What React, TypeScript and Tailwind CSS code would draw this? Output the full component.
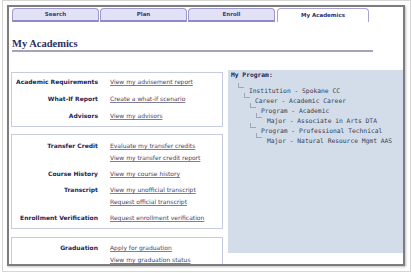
import React from "react";

const sans = { fontFamily: '"DejaVu Sans", Verdana, sans-serif' };
const mono = { fontFamily: '"DejaVu Sans Mono", monospace' };
const serif = { fontFamily: '"Liberation Serif", "Times New Roman", serif' };

type Row = { label: string; links: string[] };

function Box({ rows, gap, pt }: { rows: Row[]; gap: string; pt: string }) {
  return (
    <div className={`border border-[#c7cbe0] bg-white ${pt} pb-[4px]`}>
      <div className={`flex flex-col ${gap}`}>
        {rows.map((r) => (
          <div key={r.label} className="flex">
            <div
              className="w-[86px] shrink-0 text-right text-[6px] font-bold leading-[12px] text-[#1c2757]"
              style={sans}
            >
              {r.label}
            </div>
            <div className="ml-[12px] flex flex-col">
              {r.links.map((l) => (
                <span
                  key={l}
                  className="text-[6px] leading-[12px] text-[#3f4468] underline decoration-[#7b7f9c] underline-offset-1 whitespace-nowrap"
                  style={sans}
                >
                  {l}
                </span>
              ))}
            </div>
          </div>
        ))}
      </div>
    </div>
  );
}

function TreeItem({ level, text }: { level: number; text: string }) {
  return (
    <div className="flex items-start" style={{ paddingLeft: 7 + level * 6 }}>
      <span className="mt-[-3px] h-[5px] w-[6px] shrink-0 border-l border-b border-[#9ea6ba]" />
      <span
        className="ml-[5px] whitespace-nowrap text-[6.3px] leading-[10px] text-[#3b3e52]"
        style={mono}
      >
        {text}
      </span>
    </div>
  );
}

export default function App() {
  const tabs = ["Search", "Plan", "Enroll"];
  return (
    <div className="h-[273px] w-[412px] overflow-hidden bg-white">
      <div className="ml-[2px] h-[272px] w-[409px] border border-[#d6d6d6] bg-white">
        <div className="ml-[4px] mt-[4px] h-[261px] w-[398px] overflow-hidden border-2 border-[#7d7d7d] bg-white shadow-[1px_1px_2px_rgba(0,0,0,0.25)]">
          {/* tabs */}
          <div className="flex gap-[1px] pl-[3px] pt-[1px]">
            {tabs.map((t) => (
              <div
                key={t}
                className="flex h-[14px] w-[87px] items-center justify-center rounded-t-[4px] border border-b-2 border-[#9c99cc] border-b-[#8e8bc3] bg-[#e3e1f6] text-[5.5px] font-bold text-[#3b3b7a]"
                style={sans}
              >
                {t}
              </div>
            ))}
            <div
              className="ml-[1px] flex h-[14px] w-[92px] items-center justify-center rounded-t-[4px] border border-b-0 border-[#a6a3d3] bg-white text-[5.5px] font-bold text-[#2f2f6e]"
              style={sans}
            >
              My Academics
            </div>
          </div>

          {/* heading */}
          <div className="ml-[3px] mt-[16px] w-[361px] border-b-2 border-[#a3a3be]">
            <div
              className="text-[10.5px] font-bold leading-[12px] text-[#2b2f63]"
              style={serif}
            >
              My Academics
            </div>
          </div>

          {/* content */}
          <div className="mt-[18px] flex">
            <div className="ml-[2px] mt-[2px] flex w-[212px] shrink-0 flex-col gap-[7px]">
              <Box
                pt="pt-[3px]"
                gap="gap-[5px]"
                rows={[
                  { label: "Academic Requirements", links: ["View my advisement report"] },
                  { label: "What-If Report", links: ["Create a what-if scenario"] },
                  { label: "Advisors", links: ["View my advisors"] },
                ]}
              />
              <Box
                pt="pt-[5px]"
                gap="gap-[4px]"
                rows={[
                  {
                    label: "Transfer Credit",
                    links: ["Evaluate my transfer credits", "View my transfer credit report"],
                  },
                  { label: "Course History", links: ["View my course history"] },
                  {
                    label: "Transcript",
                    links: ["View my unofficial transcript", "Request official transcript"],
                  },
                  { label: "Enrollment Verification", links: ["Request enrollment verification"] },
                ]}
              />
              <div className="mt-[1px]">
                <Box
                  pt="pt-[4px]"
                  gap="gap-[4px]"
                  rows={[
                    {
                      label: "Graduation",
                      links: ["Apply for graduation", "View my graduation status"],
                    },
                  ]}
                />
              </div>
            </div>
            <div className="ml-[5px] h-[183px] flex-1 bg-[#d3dce9] pl-[3px]">
              <div
                className="text-[6.3px] font-bold leading-[10px] text-[#1c2757]"
                style={mono}
              >
                My Program:
              </div>
              <div className="mt-[6px] flex flex-col">
                <TreeItem level={0} text="Institution - Spokane CC" />
                <TreeItem level={1} text="Career - Academic Career" />
                <TreeItem level={2} text="Program - Academic" />
                <TreeItem level={3} text="Major - Associate in Arts DTA" />
                <TreeItem level={2} text="Program - Professional Technical" />
                <TreeItem level={3} text="Major - Natural Resource Mgmt AAS" />
              </div>
            </div>
          </div>
        </div>
      </div>
    </div>
  );
}
